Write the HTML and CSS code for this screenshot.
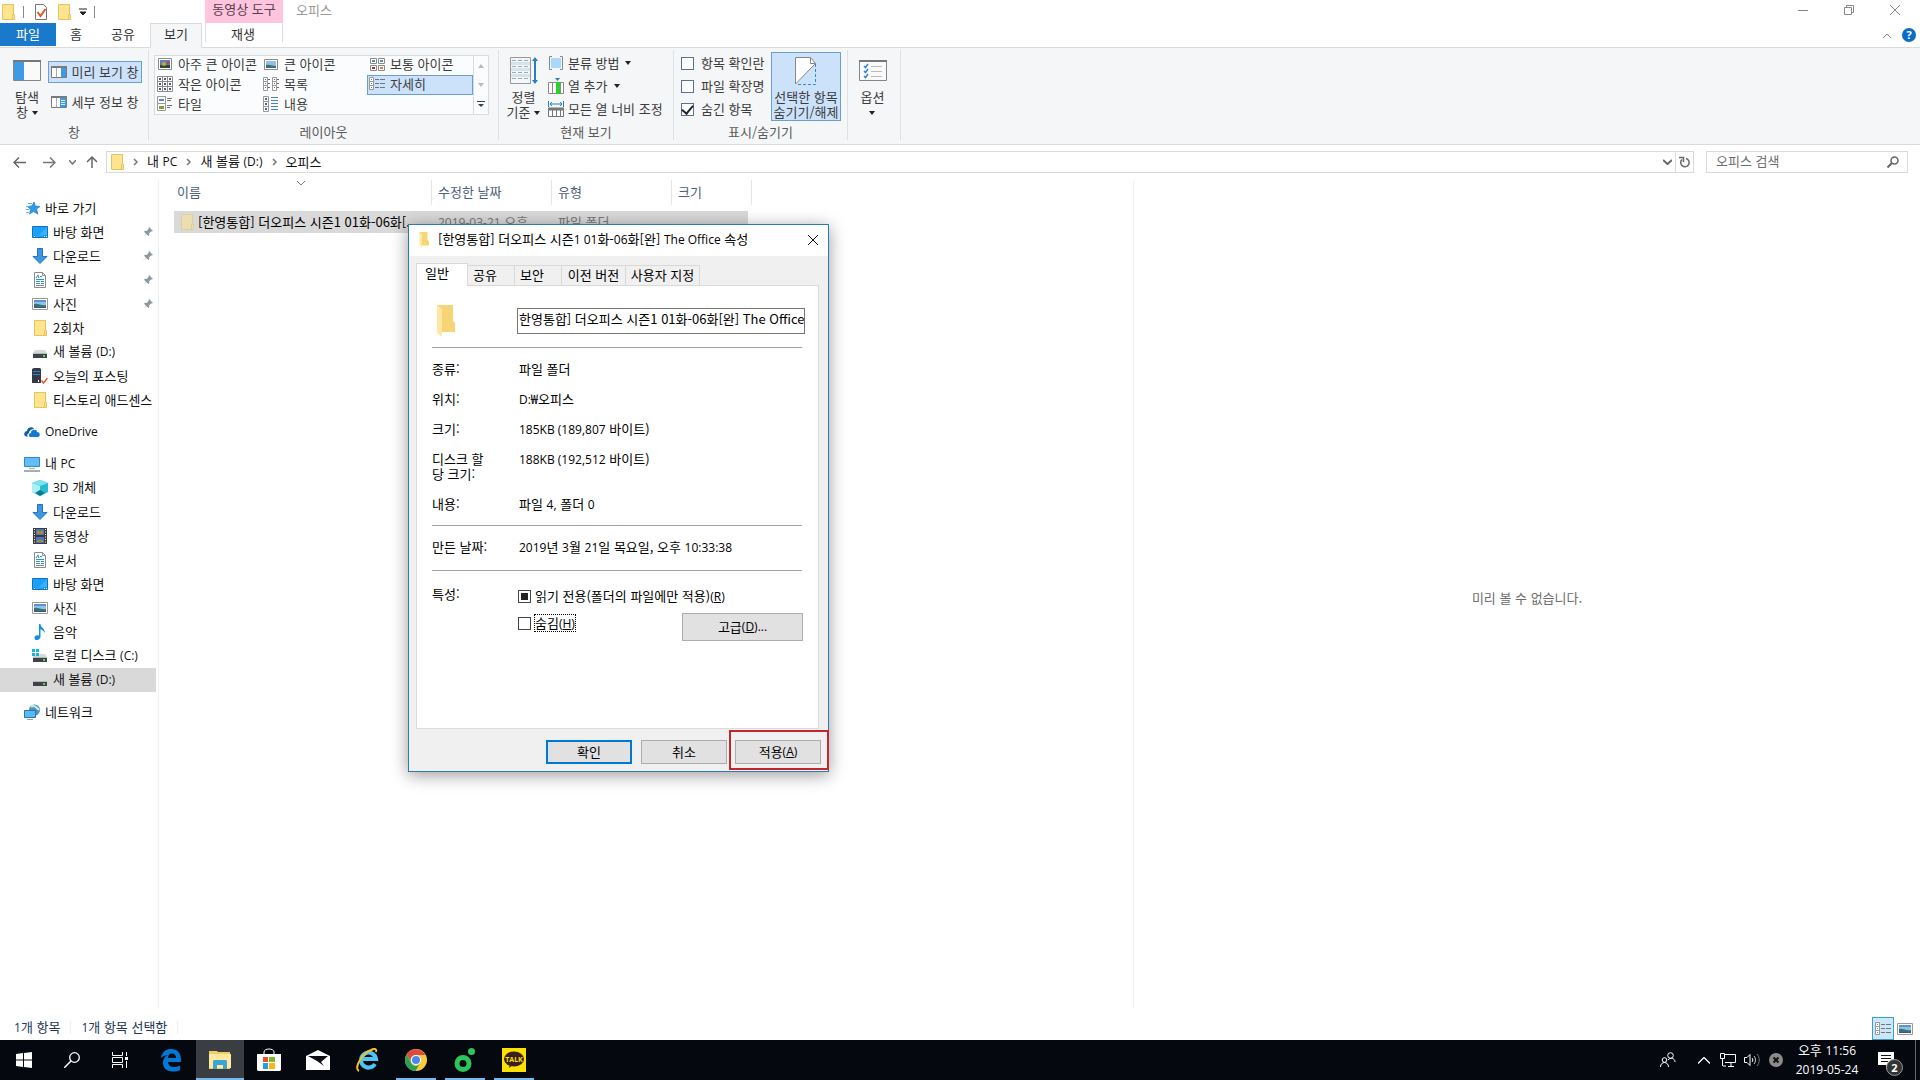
FILE: index.html
```html
<!DOCTYPE html>
<html lang="ko">
<head>
<meta charset="utf-8">
<title>오피스</title>
<link rel="stylesheet" href="styles.css">
</head>
<body>
<svg class="sprite" aria-hidden="true">
  <symbol id="folder" viewBox="0 0 16 16"><path d="M2.500.500h11v10h1v5H2.500z" fill="#ffe48f" stroke="#e6c35c"/><path d="M12.500 15v-4.500h1V.500" fill="none" stroke="#e6c35c"/></symbol>
  <symbol id="desk" viewBox="0 0 16 16"><path d="M.5 2.500h15v11H.500z" fill="#18a0fb" stroke="#1173b8"/><path d="M15 3v8L6 12z" fill="#37b0ff"/><path d="M2 12.500h1m9 0h1m1 0h1" stroke="#fff"/></symbol>
  <symbol id="down" viewBox="0 0 16 16"><path d="M5.500.500h5v8h4.500L8 15.500 1 8.500h4.500z" fill="#3c97e3" stroke="#2a72b8"/></symbol>
  <symbol id="doc" viewBox="0 0 16 16"><path d="M2.500.500h8l3 3v12h-11z" fill="#fff" stroke="#858b90"/><path d="M10.500.500v3h3" fill="none" stroke="#858b90"/><path d="M4 6l2-3 1 3M8 4.500h2M4 7.500h8M4 9.500h4m1 0h3M4 11.500h4m1 0h3" stroke="#2a93c9" fill="none"/><path d="M4 13.500h8" stroke="#888"/></symbol>
  <symbol id="pic" viewBox="0 0 16 16"><path d="M.5 2.500h15v11H.500z" fill="#fff" stroke="#999"/><path d="M2 4h12v8H2z" fill="#8fc2ea"/><path d="M2 4h12v2H2z" fill="#5b93d6"/><path d="M2 8c4-1 7 2 12 1v3H2z" fill="#3d6f70"/><path d="M2 11h12v1H2z" fill="#345b8c"/></symbol>
  <symbol id="drive" viewBox="0 0 16 16"><path d="M3 6h10l2 3H1z" fill="#d7d9da"/><path d="M1 10h14v4H1z" fill="#3f4345"/><path d="M1 9.500h14" stroke="#b5b8ba"/><path d="M11 12h2" stroke="#42e13f" stroke-width="2"/></symbol>
  <symbol id="cdrive" viewBox="0 0 16 16"><use href="#drive"/><path d="M0 1h3v3H0zM4 1h3v3H4zM0 5h3v3H0zM4 5h3v3H4z" fill="#15b1e8"/></symbol>
  <symbol id="server" viewBox="0 0 16 16"><path d="M0 1l2-1h6l1 1v14H0z" fill="#343a45"/><path d="M1 3.500h7M1 6.500h7" stroke="#2d82d8"/><path d="M6 12h1v2H6z" fill="#fff"/><path d="M9.500 12.500l2 2.500 4-5" fill="none" stroke="#e8562a" stroke-width="1.500"/></symbol>
  <symbol id="star" viewBox="0 0 16 16"><path d="M10 2l1.200 4L16 6.500 12.500 9l1.300 5L9.500 11.500 5.500 14l1.300-4.500L3.500 6.500 8 6z" fill="#2f9be8" stroke="#2384cc" stroke-width=".8"/><path d="M4 3.500h4M2 6.500h3M1.500 9.500h4M2 12.500h3" stroke="#6ab6ea"/></symbol>
  <symbol id="cloud" viewBox="0 0 16 16"><path d="M1 12a3 3 0 0 1 2-5c0-4 6-5 7-2-4 0-5 3-5 4-2 1-2 3-1 4z" fill="#0f5fae"/><path d="M6 13c-2-1-1-4 1-4 0-4 6-4 6-1 3 0 4 4 1 5z" fill="#1479d2"/></symbol>
  <symbol id="pc" viewBox="0 0 16 16"><path d="M.5 1.500h15v9H.500z" fill="#61bdf8" stroke="#3a86ba"/><path d="M5 12.500h6" stroke="#aaa"/><path d="M0 15h16" stroke="#7a94a8" stroke-width="1.500"/></symbol>
  <symbol id="cube" viewBox="0 0 16 16"><path d="M0 3l8-3 8 3v9l-8 4-8-4z" fill="#25bdd3"/><path d="M0 3l8-3 8 3-8 3z" fill="#7ee4ec"/><path d="M0 3l8 3v10l-8-4z" fill="#aeeff3"/><path d="M8 10l5 3-5 3-5-3z" fill="#0a7c93"/></symbol>
  <symbol id="film" viewBox="0 0 16 16"><path d="M1 0h14v16H1z" fill="#3b3b3b"/><path d="M4 1h8v6H4zM4 9h8v6H4z" fill="#4e74c4"/><path d="M5 3h6v3H5zM5 12h6v2H5z" fill="#a88b36"/><path d="M2.500 1v15M13.500 1v15" stroke="#fff" stroke-dasharray="1 1.500"/></symbol>
  <symbol id="note" viewBox="0 0 16 16"><path d="M7 0h1.500c0 4 5 4 4 9-1-3-3-3-4-4v8c-1 4-6 4-6 1s3-3 4.500-2.500z" fill="#1490e2"/></symbol>
  <symbol id="net" viewBox="0 0 16 16"><circle cx="10.500" cy="6" r="5.500" fill="#4f93b5"/><path d="M7 3c3-3 6 1 8 3" stroke="#cbe7f1" stroke-width="2" fill="none"/><path d="M.5 6.500h11v7H.500z" fill="#58bbf8" stroke="#2776ad"/><path d="M3 15.500h6" stroke="#8aa6b8"/></symbol>
  <symbol id="pin" viewBox="0 0 10 10"><path d="M6 0l4 4-1.200.5-.8-.1-2 2 .3 1.700-1 .9-2-2L0 10l3-3.300-2-2L2 3.800l1.700.2 2-2-.2-.8z" fill="#8c969e"/></symbol>
  <symbol id="chev" viewBox="0 0 6 8"><path d="M1 1l3 3-3 3" fill="none" stroke="#777" stroke-width="1.500"/></symbol>
  <symbol id="tri" viewBox="0 0 6 4"><path d="M0 0h6L3 4z" fill="currentColor"/></symbol>
  <symbol id="v-xl" viewBox="0 0 16 16"><path d="M1.500 2.500h13v11h-13z" fill="#fff" stroke="#8b8b8b"/><path d="M3 4h10v8H3z" fill="#5f7fc0"/><path d="M3 9h10v3H3z" fill="#2e4a3a"/><circle cx="7" cy="8" r="2" fill="#d8a22e"/><circle cx="11" cy="7" r="1.500" fill="#b6482b"/></symbol>
  <symbol id="v-lg" viewBox="0 0 16 16"><path d="M1.500 3.500h13v10h-13z" fill="#fff" stroke="#8b8b8b"/><path d="M3 5h10v7H3z" fill="#8fc2ea"/><path d="M3 9c4-1 6 1 10 1v2H3z" fill="#3d6f70"/></symbol>
  <symbol id="v-md" viewBox="0 0 16 16"><path d="M1.500 2.500h6v5h-6zM9.500 2.500h6v5h-6zM1.500 9.500h6v5h-6zM9.500 9.500h6v5h-6z" fill="#fff" stroke="#8b8b8b"/><path d="M3 4h3v2H3zM11 4h3v2h-3z" fill="#4d8fc4"/><path d="M3 11h3v2H3z" fill="#a33"/><path d="M11 11h3v2h-3z" fill="#d18728"/></symbol>
  <symbol id="v-sm" viewBox="0 0 16 16"><path d="M.5.500h15v15H.500zM5.500.500v15M10.500.500v15M.5 5.500h15M.5 10.500h15" fill="#fff" stroke="#8b8b8b"/><path d="M2 3h2m3 0h2m3 0h2M2 8h2m3 0h2m3 0h2M2 13h2m3 0h2m3 0h2" stroke="#557" stroke-width="2"/></symbol>
  <symbol id="v-list" viewBox="0 0 16 16"><path d="M.5 1.500h4v13h-4zM9.500 1.500h4v13h-4zM.5 5.500h4m-4 4h4m5-4h4m-4 4h4" fill="#fff" stroke="#999"/><path d="M2 3.500h1m-1 4h1m-1 4h1m8-8h1m-1 4h1m-1 4h1M5 3.500h2m-2 4h2m-2 4h2m7-8h2m-2 4h2m-2 4h2" stroke="#667"/></symbol>
  <symbol id="v-det" viewBox="0 0 16 16"><path d="M.5 1.500h4v12h-4zM.5 5.500h4m-4 4h4" fill="#fff" stroke="#999"/><path d="M2 3.500h1m-1 4h1m-1 4h1M6 3.500h4m1 0h5M6 7.500h4m1 0h5M6 11.500h4m1 0h5" stroke="#6c7580"/></symbol>
  <symbol id="v-tile" viewBox="0 0 16 16"><path d="M.5.500h8v14h-8zM.5 7.500h8" fill="#fff" stroke="#999"/><path d="M2 3h5v2H2z" fill="#4d8fc4"/><path d="M2 10h5v3H2z" fill="#8a9a3a"/><path d="M10 2.500h5m-5 2h4m-4 5h5m-5 2h3" stroke="#777"/></symbol>
  <symbol id="v-con" viewBox="0 0 16 16"><path d="M.5.500h5v15h-5zM.5 5.500h5m-5 5h5" fill="#fff" stroke="#999"/><path d="M2 3h2m-2 5h2m-2 5h2" stroke="#566b8c" stroke-width="2"/><path d="M8 1.500h7m-7 3h7m-7 3h7m-7 3h7m-7 3h7" stroke="#4a7fd0"/></symbol>
  <symbol id="pane-p" viewBox="0 0 16 12"><path d="M.5.500h15v11H.500z" fill="#fff" stroke="#7a7a7a"/><path d="M0 1h16" stroke="#7a7a7a" stroke-width="2"/><path d="M10 2h5v9h-5z" fill="#3c9be4"/><path d="M5.500 2v9" stroke="#aaa"/></symbol>
  <symbol id="pane-d" viewBox="0 0 16 12"><path d="M.5.500h15v11H.500z" fill="#fff" stroke="#7a7a7a"/><path d="M0 1h16" stroke="#7a7a7a" stroke-width="2"/><path d="M9 2h6v9H9z" fill="#3c9be4"/><path d="M10 4.500h4m-4 2h4m-4 2h4" stroke="#d7edff"/><path d="M5.500 2v9" stroke="#aaa"/></symbol>
  <symbol id="win" viewBox="0 0 28 21"><path d="M.5.500h27v20H.500z" fill="#fafafa" stroke="#858585"/><path d="M0 1h28" stroke="#777" stroke-width="2"/></symbol>
</svg>

<header class="titlebar">
  <div class="quick">
    <svg class="i16"><use href="#folder"/></svg><i class="bar"></i>
    <button aria-label="속성"><svg class="i16" viewBox="0 0 16 16"><path d="M2.500.500h8l3 3v12h-11z" fill="#fff" stroke="#777"/><path d="M4.500 8l3 4 5-7" stroke="#e0592a" stroke-width="2" fill="none"/></svg></button>
    <button aria-label="새 폴더"><svg class="i16"><use href="#folder"/></svg></button>
    <button aria-label="사용자 지정"><svg width="8" height="8" viewBox="0 0 8 8"><path d="M0 1h8M1 4h6L4 7z" stroke="#222" fill="#222"/></svg></button><i class="bar"></i>
  </div>
  <div class="context">동영상 도구</div>
  <h1>오피스</h1>
  <div class="winbtns">
    <button aria-label="최소화"><svg width="10" height="10"><path d="M0 5.500h10" stroke="#888"/></svg></button>
    <button aria-label="이전 크기로"><svg width="10" height="10"><path d="M.5 2.500h7v7h-7zM2.500 2V.500h7v7H8" fill="none" stroke="#888"/></svg></button>
    <button aria-label="닫기"><svg width="10" height="10"><path d="M0 0l10 10M10 0L0 10" stroke="#888"/></svg></button>
  </div>
</header>
<nav class="tabs">
  <button class="file">파일</button><button class="t-home">홈</button><button class="t-share">공유</button><button class="t-view">보기</button><button class="t-play">재생</button>
  <div class="help"><svg width="8" height="5"><path d="M0 5l4-4 4 4" fill="none" stroke="#888"/></svg><button class="q" aria-label="도움말">?</button></div>
</nav>

<section class="ribbon">
  <div class="group g-pane">
    <div class="tools">
      <button class="big"><svg width="28" height="21"><use href="#win"/><path d="M1 2h10v18H1z" fill="#3c9be4"/></svg><span>탐색<br>창<svg class="tri"><use href="#tri"/></svg></span></button>
      <div class="stack panes"><button class="small on"><svg width="16" height="12"><use href="#pane-p"/></svg>미리 보기 창</button><button class="small"><svg width="16" height="12"><use href="#pane-d"/></svg>세부 정보 창</button></div>
    </div>
    <h2>창</h2>
  </div>
  <div class="group g-layout">
    <div class="tools">
      <div class="gallery">
        <div class="views">
          <button><svg class="i16"><use href="#v-xl"/></svg>아주 큰 아이콘</button><button><svg class="i16"><use href="#v-lg"/></svg>큰 아이콘</button><button><svg class="i16"><use href="#v-md"/></svg>보통 아이콘</button>
          <button><svg class="i16"><use href="#v-sm"/></svg>작은 아이콘</button><button><svg class="i16"><use href="#v-list"/></svg>목록</button><button class="on"><svg class="i16"><use href="#v-det"/></svg>자세히</button>
          <button><svg class="i16"><use href="#v-tile"/></svg>타일</button><button><svg class="i16"><use href="#v-con"/></svg>내용</button>
        </div>
        <div class="spin"><button aria-label="위로"><svg width="6" height="4"><path d="M0 4h6L3 0z" fill="#bbb"/></svg></button><button aria-label="아래로"><svg width="6" height="4"><path d="M0 0h6L3 4z" fill="#bbb"/></svg></button><button aria-label="자세히"><svg width="8" height="7"><path d="M0 .5h8" stroke="#345"/><path d="M1 3h6L4 6z" fill="#345"/></svg></button></div>
      </div>
    </div>
    <h2>레이아웃</h2>
  </div>
  <div class="group g-current">
    <div class="tools">
      <button class="big"><svg class="sort" width="28" height="28" viewBox="0 0 28 28"><path d="M.5.500h20v26H.500z" fill="#f4f7f9" stroke="#999"/><path d="M1 5h19v3H1zM1 11h19v3H1zM1 17h19v3H1z" fill="#cfe6f1"/><path d="M2 3.500h17M2 9.500h17M2 15.500h17M2 21.500h17" stroke="#aaa" stroke-dasharray="4 2"/><path d="M25 2v23" stroke="#2b7fc0" stroke-width="2"/><path d="M25 0l3 4h-6zM25 27l3-4h-6z" fill="#2b7fc0"/></svg><span>정렬<br>기준<svg class="tri"><use href="#tri"/></svg></span></button>
      <div class="stack cols">
        <button class="small"><svg class="i16" viewBox="0 0 16 16"><path d="M4 1.500H1.500v13H4M12 1.500h2.500v13H12" fill="none" stroke="#888"/><path d="M3 3h10v10H3z" fill="#a8d8fa"/></svg>분류 방법<svg class="tri"><use href="#tri"/></svg></button>
        <button class="small"><svg class="i16" viewBox="0 0 16 16"><path d="M.5 4.500h15v11H.500zM4.500 4v11M12.500 4v11" fill="#fff" stroke="#888"/><path d="M8 4h4v12H8z" fill="#2bd02b"/><path d="M7 0h5L9.500 3z" fill="#2b7fc0"/></svg>열 추가<svg class="tri"><use href="#tri"/></svg></button>
        <button class="small"><svg class="i16" viewBox="0 0 16 16"><path d="M.5 8.500h15v7H.500zM4.500 9v7M8.500 9v7M12.500 9v7" fill="#fff" stroke="#777"/><path d="M0 8h16" stroke="#777" stroke-width="3"/><path d="M.5 0v6M15.500 0v6M2 3h12M4 1L2 3l2 2M12 1l2 2-2 2" stroke="#2b7fc0" fill="none"/></svg>모든 열 너비 조정</button>
      </div>
    </div>
    <h2>현재 보기</h2>
  </div>
  <div class="group g-show">
    <div class="tools">
      <div class="stack checks">
        <label><input type="checkbox">항목 확인란</label>
        <label><input type="checkbox">파일 확장명</label>
        <label><input type="checkbox" checked>숨긴 항목</label>
      </div>
      <button class="big on"><svg class="sort" width="22" height="28" viewBox="0 0 22 28"><path d="M.5.500h15l5 6L.5 27z" fill="#fff" stroke="#888"/><path d="M15.500.500v6h5" fill="none" stroke="#888"/><path d="M20.500 7v20.500H1" fill="none" stroke="#3b86cc" stroke-dasharray="3 2"/></svg><span>선택한 항목<br>숨기기/해제</span></button>
    </div>
    <h2>표시/숨기기</h2>
  </div>
  <div class="group g-opt">
    <div class="tools"><button class="big"><svg width="28" height="21"><use href="#win"/><path d="M5 6l1.500 1.500L9 4M5 11l1.500 1.500L9 9M5 16l1.500 1.500L9 14" stroke="#2f83d0" stroke-width="1.500" fill="none"/><path d="M12 6.500h11M12 11.500h11M12 16.500h11" stroke="#bbb"/></svg><span>옵션<br><svg class="tri"><use href="#tri"/></svg></span></button></div>
  </div>
</section>

<div class="address">
  <div class="nav">
    <button aria-label="뒤로"><svg width="13" height="11"><path d="M13 5.500H1M6 .5l-5 5 5 5" stroke="#666" stroke-width="1.500" fill="none"/></svg></button>
    <button aria-label="앞으로"><svg width="13" height="11"><path d="M0 5.500h12M7 .5l5 5-5 5" stroke="#777" stroke-width="1.500" fill="none"/></svg></button>
    <button class="nar" aria-label="최근"><svg width="7" height="5"><path d="M0 0l3.500 4L7 0" stroke="#777" stroke-width="1.500" fill="none"/></svg></button>
    <button aria-label="위로"><svg width="12" height="12"><path d="M6 12V1M1 6l5-5 5 5" stroke="#666" stroke-width="1.500" fill="none"/></svg></button>
  </div>
  <div class="path">
    <svg class="i16"><use href="#folder"/></svg><svg class="chev"><use href="#chev"/></svg>
    <a href="#">내 <span class="en">PC</span></a><svg class="chev"><use href="#chev"/></svg>
    <a href="#">새 볼륨 <span class="en">(D:)</span></a><svg class="chev"><use href="#chev"/></svg>
    <a href="#">오피스</a>
    <button class="hist" aria-label="이전 위치"><svg width="9" height="6"><path d="M0 1l4.500 4L9 1" stroke="#666" stroke-width="2" fill="none"/></svg></button>
    <button class="reload" aria-label="새로 고침"><svg width="11" height="12"><path d="M7 2.500a4.200 4.200 0 1 1-4 1M0 1.500h4.500V6" stroke="#666" stroke-width="1.500" fill="none"/></svg></button>
  </div>
  <div class="search"><input type="text" placeholder="오피스 검색" aria-label="오피스 검색"><svg width="12" height="12"><circle cx="7.500" cy="4.500" r="3.500" fill="none" stroke="#666" stroke-width="1.500"/><path d="M5 7l-4.500 4.500" stroke="#666" stroke-width="2"/></svg></div>
</div>

<main>
  <aside>
    <a href="#" class="root"><svg class="i16"><use href="#star"/></svg>바로 가기</a>
    <a href="#"><svg class="i16"><use href="#desk"/></svg>바탕 화면<svg class="pin"><use href="#pin"/></svg></a>
    <a href="#"><svg class="i16"><use href="#down"/></svg>다운로드<svg class="pin"><use href="#pin"/></svg></a>
    <a href="#"><svg class="i16"><use href="#doc"/></svg>문서<svg class="pin"><use href="#pin"/></svg></a>
    <a href="#"><svg class="i16"><use href="#pic"/></svg>사진<svg class="pin"><use href="#pin"/></svg></a>
    <a href="#"><svg class="i16"><use href="#folder"/></svg>2회차</a>
    <a href="#"><svg class="i16"><use href="#drive"/></svg><span>새 볼륨 <span class="en">(D:)</span></span></a>
    <a href="#"><svg class="i16"><use href="#server"/></svg>오늘의 포스팅</a>
    <a href="#"><svg class="i16"><use href="#folder"/></svg>티스토리 애드센스</a>
    <a href="#" class="root gap"><svg class="i16"><use href="#cloud"/></svg><span class="en">OneDrive</span></a>
    <a href="#" class="root gap"><svg class="i16"><use href="#pc"/></svg><span>내 <span class="en">PC</span></span></a>
    <a href="#"><svg class="i16"><use href="#cube"/></svg><span><span class="en">3D</span> 개체</span></a>
    <a href="#"><svg class="i16"><use href="#down"/></svg>다운로드</a>
    <a href="#"><svg class="i16"><use href="#film"/></svg>동영상</a>
    <a href="#"><svg class="i16"><use href="#doc"/></svg>문서</a>
    <a href="#"><svg class="i16"><use href="#desk"/></svg>바탕 화면</a>
    <a href="#"><svg class="i16"><use href="#pic"/></svg>사진</a>
    <a href="#"><svg class="i16"><use href="#note"/></svg>음악</a>
    <a href="#"><svg class="i16"><use href="#cdrive"/></svg><span>로컬 디스크 <span class="en">(C:)</span></span></a>
    <a href="#" class="sel"><svg class="i16"><use href="#drive"/></svg><span>새 볼륨 <span class="en">(D:)</span></span></a>
    <a href="#" class="root gap"><svg class="i16"><use href="#net"/></svg>네트워크</a>
  </aside>
  <section class="files">
    <table>
      <thead><tr><th class="c-name"><div>이름<svg class="caret" width="8" height="5"><path d="M0 0l4 4 4-4" fill="none" stroke="#777"/></svg></div></th><th class="c-mid"><div>수정한 날짜</div></th><th class="c-mid"><div>유형</div></th><th class="c-size"><div>크기</div></th></tr></thead>
      <tbody><tr><td><div class="name"><svg class="i16"><use href="#folder"/></svg><span>[한영통합] 더오피스 시즌1 01화-06화[...</span></div></td><td><span class="en">2019-03-21</span> 오후</td><td>파일 폴더</td><td></td></tr></tbody>
    </table>
  </section>
  <section class="preview"><p>미리 볼 수 없습니다.</p></section>
</main>

<footer class="status">
  <span><span class="en">1</span>개 항목</span><span><span class="en">1</span>개 항목 선택함</span>
  <div class="modes"><button class="on" aria-label="자세히"><svg class="i16"><use href="#v-det"/></svg></button><button aria-label="큰 아이콘"><svg class="i16"><use href="#pic"/></svg></button></div>
</footer>

<div class="taskbar">
  <div class="sys">
    <button aria-label="시작"><svg width="16" height="16"><path d="M0 2l7-1v6.500H0zM8 1l8-1v7.500H8zM0 8.500h7V15l-7-1zM8 8.500h8V16l-8-1z" fill="#fff"/></svg></button>
    <button aria-label="검색"><svg width="16" height="16"><circle cx="10.500" cy="5.500" r="4.800" fill="none" stroke="#fff" stroke-width="1.300"/><path d="M7 9l-7 7" stroke="#fff" stroke-width="1.500"/></svg></button>
    <button aria-label="작업 보기"><svg width="16" height="16"><path d="M.5 0v3.500h10V0M.5 16v-3.500h10V16M.5 5.500h10v5H.500zM14.500 0v4M14.500 9v7" fill="none" stroke="#fff"/><path d="M13 5h3v3h-3z" fill="#fff"/></svg></button>
  </div>
  <div class="apps">
    <button aria-label="Edge"><svg width="22" height="24" viewBox="0 0 22 24"><path d="M1 10C2 3 7 1 11 1c7 0 10 5 10 10v3H8c0 3 3 5 6 5 2 0 4-.5 6-1.500v4.500c-2 1-4 1.500-7 1.500C7 23.500 3 20 3 15c0-4 2-7 5-8-3 0-5 1-7 3zm7 0h8c0-3-1.500-4.500-4-4.500S8 7.500 8 10z" fill="#0078d7"/></svg></button>
    <button class="act run" aria-label="파일 탐색기"><svg width="22" height="20" viewBox="0 0 22 20"><path d="M0 1h8l1 1h12v17H0z" fill="#f3cf63"/><path d="M0 4h22v14H0z" fill="#ffe9a0"/><path d="M4 11l1-1h12l1 1v8h-4v-4H8v4H4z" fill="#3ba5d5"/></svg></button>
    <button aria-label="스토어"><svg width="24" height="24"><path d="M7 6V4c0-4 10-4 10 0v2" fill="none" stroke="#fff"/><path d="M0 6h24v16l-1 1H1l-1-1z" fill="#fff"/><path d="M6 9h5v5H6z" fill="#e8502a"/><path d="M12 9h6v5h-6z" fill="#7fb92b"/><path d="M6 15h5v6H6z" fill="#1ba1e8"/><path d="M12 15h6v6h-6z" fill="#fbb613"/></svg></button>
    <button aria-label="메일"><svg width="24" height="20"><path d="M0 6l12-6 12 6v14H0z" fill="#fff"/><path d="M2 6h20l-7 6 3 4-7-5z" fill="#0a0c12"/></svg></button>
    <button aria-label="Internet Explorer"><svg width="24" height="24"><path d="M20 16a7.500 7.500 0 1 1 1-5H8" fill="none" stroke="#4cc5f3" stroke-width="4"/><path d="M4 23C-2 20 8 5 16 2c4-2 6-1 5 2" fill="none" stroke="#f5c02b" stroke-width="2"/></svg></button>
    <button class="run" aria-label="Chrome"><svg width="22" height="22"><circle cx="11" cy="11" r="11" fill="#fbca3e"/><path d="M1.500 5.500A11 11 0 0 1 20.500 6H11a5 5 0 0 0-5 7z" fill="#dd4b3e"/><path d="M1.500 5.500A11 11 0 0 0 10.500 22l5-8.500a5 5 0 0 1-9.500 0z" fill="#26a05a"/><circle cx="11" cy="11" r="5" fill="#fff"/><circle cx="11" cy="11" r="4" fill="#4688f1"/></svg></button>
    <button class="run" aria-label="음악"><svg width="22" height="24"><circle cx="9" cy="15.500" r="6" fill="none" stroke="#2bc55c" stroke-width="5"/><circle cx="17.500" cy="3.500" r="3.500" fill="#2bc55c"/></svg></button>
    <button class="run" aria-label="카카오톡"><svg width="24" height="24"><path d="M0 0h24v24H0z" fill="#fae100"/><path d="M8 16l-1 4 4-3z" fill="#3b1f1e"/><ellipse cx="12" cy="11" rx="10" ry="7.500" fill="#3b1f1e"/><text x="12" y="14" class="talk">TALK</text></svg></button>
  </div>
  <div class="tray">
    <button aria-label="피플"><svg width="16" height="16"><circle cx="10.500" cy="3.500" r="2.800" fill="none" stroke="#fff"/><circle cx="4.500" cy="8" r="2.300" fill="none" stroke="#fff"/><path d="M.5 15c0-6 8-6 8 0M8 8c2-3 7-2 7 2" fill="none" stroke="#fff"/></svg></button>
    <button aria-label="숨겨진 아이콘"><svg width="12" height="7"><path d="M0 6.500l6-6 6 6" fill="none" stroke="#fff" stroke-width="1.300"/></svg></button>
    <button aria-label="네트워크"><svg width="16" height="14"><path d="M5 1.500h10.500v8H5M8 13.500h6M11 10v3M3 13h3" fill="none" stroke="#fff"/><path d="M.5.500h4v5h-4zM2.500 6v7" fill="none" stroke="#fff"/></svg></button>
    <button aria-label="볼륨"><svg width="16" height="14"><path d="M.5 4.500H3l3-3v11l-3-3H.500zM8 5c1 1 1 3 0 4" fill="none" stroke="#fff"/><path d="M10 3c2 2 2 6 0 8" fill="none" stroke="#ccc"/><path d="M13 1c3 3 3 9 0 12" fill="none" stroke="#777"/></svg></button>
    <button aria-label="상태"><svg width="14" height="14"><circle cx="7" cy="7" r="7" fill="#8b8b8b"/><path d="M4.500 4.500l5 5m0-5l-5 5" stroke="#111" stroke-width="2"/></svg></button>
    <div class="clock">오후 <span class="en">11:56</span><br><span class="en">2019-05-24</span></div>
    <button class="center" aria-label="알림 센터"><svg width="16" height="17"><path d="M0 0h16v13h-5l-3 4v-4H0z" fill="#fff"/><path d="M3 3.500h10M3 6.500h10M3 9.500h7" stroke="#111"/></svg><b>2</b></button>
    <i></i>
  </div>
</div>

<div class="dialog" role="dialog" aria-label="속성">
  <header><svg width="16" height="16" viewBox="0 0 22 32"><path d="M2 0h16v16l3 3v8H6z" fill="#f5d576"/><path d="M2 0l5 4v28l-5-5z" fill="#ffe7a0"/></svg><h2>[한영통합] 더오피스 시즌<span class="en">1 01</span>화-<span class="en">06</span>화[완] <span class="en">The Office</span> 속성</h2><button aria-label="닫기"><svg width="12" height="12"><path d="M1 1l10 10M11 1L1 11" stroke="#111"/></svg></button></header>
  <div class="dtabs"><button class="on">일반</button><button>공유</button><button>보안</button><button class="w">이전 버전</button><button class="x">사용자 지정</button></div>
  <div class="page">
    <div class="namerow"><svg width="20" height="32" viewBox="0 0 20 32"><path d="M1 0h16v16l2 2v9H5z" fill="#f5d576"/><path d="M1 0l5 4v28l-5-4z" fill="#ffe7a0"/></svg><input type="text" aria-label="이름" value="한영통합] 더오피스 시즌1 01화-06화[완] The Office"></div>
    <dl class="info">
      <dt>종류:</dt><dd>파일 폴더</dd>
      <dt>위치:</dt><dd><span class="en">D:</span>₩오피스</dd>
      <dt>크기:</dt><dd><span class="en">185KB (189,807</span> 바이트)</dd>
      <dt class="two">디스크 할<br>당 크기:</dt><dd class="two"><span class="en">188KB (192,512</span> 바이트)</dd>
      <dt>내용:</dt><dd>파일 <span class="en">4,</span> 폴더 <span class="en">0</span></dd>
    </dl>
    <dl class="info date"><dt>만든 날짜:</dt><dd><span class="en">2019</span>년 <span class="en">3</span>월 <span class="en">21</span>일 목요일, 오후 <span class="en">10:33:38</span></dd></dl>
    <div class="attrs">
      <span>특성:</span>
      <div class="opts">
        <label><input type="checkbox" class="mixed"><span>읽기 전용(폴더의 파일에만 적용)<span class="en">(<u>R</u>)</span></span></label>
        <div class="line"><label><input type="checkbox"><span class="focus">숨김<span class="en">(<u>H</u>)</span></span></label><button class="push adv">고급<span class="en">(<u>D</u>)...</span></button></div>
      </div>
    </div>
  </div>
  <div class="actions"><button class="push def">확인</button><button class="push">취소</button><span class="mark"><button class="push">적용<span class="en">(<u>A</u>)</span></button></span></div>
</div>
</body>
</html>
```
FILE: styles.css
```css
* { box-sizing: border-box; }
body { margin: 0; height: 100vh; display: flex; flex-direction: column; overflow: hidden; position: relative; background: #fff; color: #111; font: 13px/16px "Noto Sans CJK KR", sans-serif; }
button { font: inherit; color: inherit; background: none; border: 0; padding: 0; display: flex; align-items: center; justify-content: center; white-space: nowrap; }
input { font: inherit; color: inherit; margin: 0; }
a { color: inherit; text-decoration: none; }
h1, h2, p, dl, dd { margin: 0; font-size: 13px; font-weight: inherit; }
svg { flex: none; display: block; }
.en { font-family: "Open Sans", sans-serif; font-size: 12px; }
.sprite { position: absolute; width: 0; height: 0; }
.i16 { width: 16px; height: 16px; }
.tri { width: 6px; height: 4px; display: inline-block; vertical-align: middle; margin-left: 4px; color: #222; }

.titlebar { display: flex; height: 23px; flex: none; }
.quick { width: 205px; display: flex; align-items: center; gap: 7px; }
.quick .bar { width: 1px; height: 12px; background: #888; }
.quick .i16 + .bar { margin-right: 2px; }
.context { width: 78px; background: #ffc5df; color: #54404b; text-align: center; padding-top: 1px; }
.titlebar h1 { padding: 2px 0 0 13px; color: #999; flex: 1; }
.winbtns { display: flex; height: 20px; padding-right: 2px; }
.winbtns button { width: 46px; }
.tabs { display: flex; height: 24px; flex: none; color: #333; position: relative; z-index: 1; }
.tabs button { padding-bottom: 2px; }
.tabs .file { width: 56px; height: 23px; background: #1979ca; color: #fff; }
.t-home { width: 40px; }
.t-share { width: 54px; }
.tabs .t-view { width: 52px; height: 25px; padding-bottom: 4px; background: #f5f6f7; border: 1px solid #dadbdc; border-bottom: 0; }
.tabs .t-play { width: 78px; height: 19px; margin-left: 3px; padding: 2px 2px 0 0; border: solid #ddd; border-width: 0 1px; }
.help { margin-left: auto; display: flex; align-items: center; gap: 11px; padding-right: 4px; }
.tabs .q { width: 14px; height: 14px; border-radius: 50%; background: #0b6dc8; color: #fff; font: bold 11px/14px "Open Sans", sans-serif; padding: 0; }

.ribbon { display: flex; height: 98px; flex: none; background: #f5f6f7; border: solid #dadbdc; border-width: 1px 0; padding: 2px 0 4px; color: #3c3c3c; }
.group { border-right: 1px solid #e0e1e2; display: flex; flex-direction: column; justify-content: space-between; }
.group h2 { text-align: center; color: #5a5a5a; }
.tools { display: flex; height: 72px; }
.big { flex-direction: column; line-height: 15px; gap: 8px; padding-top: 10px; justify-content: flex-start; align-items: center; }
.big .sort { margin: -3px 0 -4px; }
.stack { display: flex; flex-direction: column; align-items: flex-start; }
.small { gap: 4px; height: 22px; }
.small .tri { margin-left: 2px; }
.on { background: #cce2fb; box-shadow: inset 0 0 0 1px #6c9fd0; }
.g-pane { width: 149px; }
.g-pane .big { width: 48px; padding-left: 6px; }
.panes { gap: 8px; padding-top: 11px; }
.panes .small { width: 94px; padding-bottom: 1px; }
.g-layout { width: 350px; }
.g-layout .tools { padding: 0 9px 0 5px; }
.gallery { display: flex; flex: 1; height: 60px; margin-top: 5px; border: 1px solid #dadbdc; background: #fbfcfd; }
.views { flex: 1; display: grid; grid-template-columns: repeat(3, 106px); grid-auto-rows: 20px; margin: -1px 0; }
.views button { justify-content: flex-start; gap: 5px; padding: 0 0 2px 2px; line-height: 18px; }
.spin { width: 15px; border-left: 1px solid #dadbdc; display: flex; flex-direction: column; }
.spin button { flex: 1; }
.g-current { width: 175px; }
.g-current .big { width: 49px; }
.cols { gap: 1px; padding-top: 2px; }
.g-show { width: 174px; }
.g-show .tools { padding-left: 7px; }
.checks { gap: 1px; padding-top: 2px; width: 90px; }
.checks label { display: flex; align-items: center; gap: 7px; height: 22px; white-space: nowrap; }
.g-show .on { width: 70px; height: 69px; margin-top: 2px; padding-top: 8px; }
.g-opt { width: 53px; }
.g-opt .big { flex: 1; padding-right: 3px; }
.g-opt .tri { margin-left: 0; }
input[type=checkbox] { appearance: none; width: 13px; height: 13px; border: 1px solid #444; background: #fff; flex: none; display: grid; place-items: center; }
.checks input[type=checkbox] { border-color: #5f6f8f; }
input[type=checkbox]:checked::before { content: ""; width: 5px; height: 9px; margin-top: -2px; border: solid #222; border-width: 0 2px 2px 0; transform: rotate(40deg); }
input.mixed::before { content: ""; width: 7px; height: 7px; background: #222; }

.address { display: flex; height: 35px; flex: none; padding: 6px 12px 7px 0; }
.nav { width: 106px; display: flex; padding: 0 2px 0 4px; }
.nav button { width: 30px; }
.nav .nar { width: 16px; }
.nav button:last-child { width: 24px; }
.path { flex: 1; border: 1px solid #d9d9d9; display: flex; align-items: center; padding-left: 2px; }
.path a { padding: 0 1px; margin-bottom: 1px; }
.chev { width: 6px; height: 8px; margin: 0 7px 0 8px; }
.path .hist { margin-left: auto; width: 16px; }
.path .reload { width: 18px; height: 20px; border-left: 1px solid #d9d9d9; }
.search { width: 202px; margin-left: 12px; border: 1px solid #d9d9d9; display: flex; align-items: center; padding: 0 8px 0 9px; }
.search input { border: 0; padding: 0 0 2px; flex: 1; min-width: 0; background: none; }
.search input::placeholder { color: #6d6d6d; }

main { flex: 1; display: flex; min-height: 0; }
aside { width: 159px; border-right: 1px solid #f0f0f0; padding-top: 16px; margin-bottom: 4px; }
aside a { display: flex; align-items: center; height: 24px; gap: 5px; padding: 0 3px 1px 32px; width: 156px; white-space: nowrap; }
aside a.root { padding-left: 24px; }
aside .gap { margin-top: 8px; }
aside .sel { background: #d9d9d9; }
.pin { width: 10px; height: 10px; margin-left: auto; }
.files { flex: 1; padding-left: 15px; min-width: 0; }
table { border-collapse: collapse; table-layout: fixed; width: 574px; }
th { padding: 0 0 6px; font-weight: inherit; text-align: left; color: #4c607a; }
th div { height: 25px; line-height: 23px; border-right: 1px solid #e5e5e5; padding-left: 6px; position: relative; }
.c-name { width: 258px; }
.c-name div { padding-left: 3px; }
.c-mid { width: 120px; }
.c-size div { margin-right: -4px; }
.caret { position: absolute; left: 123px; top: 1px; }
td { height: 22px; padding: 0 6px; background: #d9d9d9; color: #777; white-space: nowrap; }
.name { display: flex; align-items: center; gap: 3px; color: #000; margin-left: -1px; }
.name svg { opacity: .5; }
.preview { width: 787px; border-left: 1px solid #f0f0f0; display: flex; align-items: center; justify-content: center; color: #6d6d6d; margin-bottom: 4px; padding-top: 8px; }

.status { height: 28px; flex: none; display: flex; align-items: center; color: #22364f; padding: 2px 7px 0 14px; }
.status > span { padding-right: 10px; margin-right: 10px; border-right: 1px solid #eee; line-height: 12px; }
.modes { margin-left: auto; display: flex; gap: 3px; align-self: flex-end; }
.modes button { height: 23px; width: 16px; }
.modes .on { width: 22px; background: #cce8f6; box-shadow: inset 0 0 0 1px #3a9fd0; }

.taskbar { height: 40px; flex: none; display: flex; background: #05080f; color: #fff; }
.sys, .apps, .tray { display: flex; }
.sys button { width: 48px; }
.apps { padding-left: 3px; gap: 1px; }
.apps button { width: 48px; }
.apps .run { border: solid transparent; border-width: 0 4px; background: linear-gradient(#76b9ed, #76b9ed) 0 100% / 100% 2px no-repeat; background-clip: padding-box; }
.apps .act { border-width: 0; background: linear-gradient(#76b9ed, #76b9ed) 0 100% / 100% 2px no-repeat, #3a3d42; }
.talk { font: bold 7px "Open Sans", sans-serif; fill: #fae100; text-anchor: middle; }
.tray { margin-left: auto; align-items: center; }
.tray button { width: 24px; height: 40px; }
.tray button:first-child { width: 42px; padding-right: 6px; }
.clock { width: 78px; text-align: center; line-height: 18px; margin-right: 3px; }
.tray .center { width: 46px; position: relative; padding-right: 12px; }
.center b { position: absolute; left: 17px; top: 19px; width: 17px; height: 17px; border-radius: 50%; background: #333; border: 1px solid #999; font: bold 11px/15px "Open Sans", sans-serif; text-align: center; }
.tray i { width: 5px; height: 40px; border-left: 1px solid #667; }

.dialog { position: absolute; left: 408px; top: 224px; width: 421px; border: 1px solid #2a7ab5; background: #f0f0f0; box-shadow: 0 3px 16px rgba(0, 0, 0, .4); color: #000; }
.dialog header { display: flex; align-items: center; height: 31px; background: #fff; padding: 0 9px 2px 7px; gap: 6px; }
.dialog h2 { flex: 1; white-space: nowrap; }
.dtabs { display: flex; align-items: flex-end; padding: 7px 7px 0; height: 30px; position: relative; margin-bottom: -1px; }
.dtabs button { width: 47px; height: 21px; border: 1px solid #d9d9d9; border-left: 0; padding: 0 12px 2px 0; }
.dtabs .on { width: 52px; height: 23px; background: #fff; box-shadow: none; border-left: 1px solid #d9d9d9; border-bottom: 0; padding: 0 10px 4px 0; }
.dtabs .w { width: 64px; padding: 0 0 2px; }
.dtabs .x { width: 74px; padding: 0 0 2px; }
.page { margin: 0 9px 0 7px; border: 1px solid #dcdcdc; background: #fff; height: 444px; padding: 17px 16px 0 15px; }
.namerow { display: flex; align-items: center; height: 44px; padding: 0 0 8px 4px; }
.namerow input { margin-left: auto; margin-right: -3px; width: 288px; height: 26px; border: 1px solid #767676; padding: 0 0 6px 1px; }
.info { display: grid; grid-template-columns: 87px 1fr; border-top: 1px solid #a0a0a0; padding-top: 6px; grid-auto-rows: 30px; height: 178px; line-height: 30px; }
.info .two { line-height: 15px; padding-top: 7px; }
.info:not(.date) { grid-template-rows: 30px 30px 30px 45px 30px; }
.info.date { height: 45px; }
.attrs { border-top: 1px solid #a0a0a0; padding-top: 15px; display: grid; grid-template-columns: 86px 1fr; }
.opts label { display: flex; align-items: center; gap: 4px; height: 20px; white-space: nowrap; }
.line { display: flex; justify-content: space-between; margin: 7px -1px 0 0; }
.focus { outline: 1px dotted #000; line-height: 15px; }
.push { width: 86px; height: 24px; background: #e1e1e1; border: 1px solid #adadad; }
.adv { width: 121px; height: 28px; }
.def { border: 2px solid #0078d7; }
.actions { display: flex; justify-content: flex-end; align-items: flex-end; height: 41px; margin-bottom: 1px; }
.actions .push { margin: 0 9px 6px 0; }
.actions .push:nth-child(2) { margin-right: 2px; }
.mark { border: 2px solid #c1272d; padding: 8px 6px 4px 4px; height: 40px; margin-right: -1px; }
.actions .mark .push { margin: 0; }
```
